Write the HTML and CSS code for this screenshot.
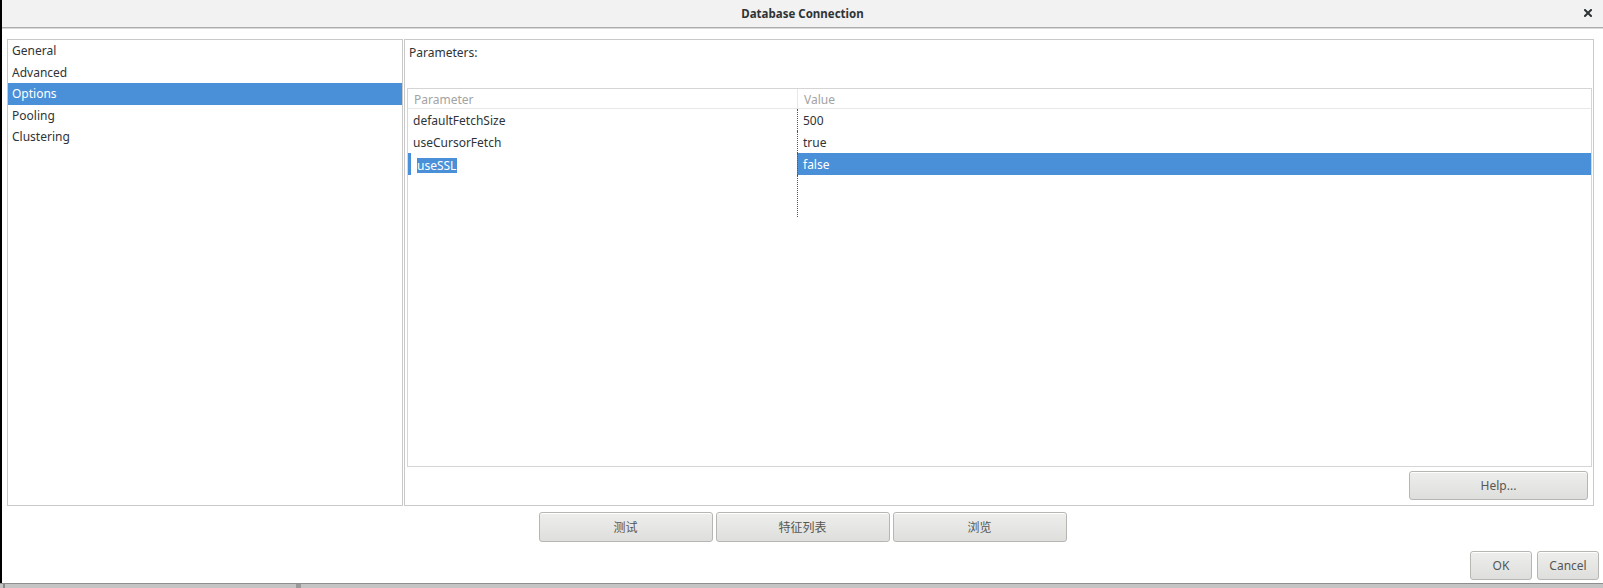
FILE: index.html
```html
<!DOCTYPE html>
<html>
<head>
<meta charset="utf-8">
<title>Database Connection</title>
<link rel="stylesheet" href="styles.css">
</head>
<body>
<div class="window">
  <div class="titlebar">
    <span class="title">Database Connection</span>
    <svg class="close" width="8" height="8" viewBox="0 0 8 8"><path d="M1 1 L7 7 M7 1 L1 7" stroke="#2e3436" stroke-width="2" stroke-linecap="square"/></svg>
  </div>
  <div class="panels">
    <div class="nav">
      <div class="nav-item">General</div>
      <div class="nav-item">Advanced</div>
      <div class="nav-item selected">Options</div>
      <div class="nav-item">Pooling</div>
      <div class="nav-item">Clustering</div>
    </div>
    <div class="options">
      <div class="params-label">Parameters:</div>
      <div class="table">
        <div class="thead">
          <div class="th th-param">Parameter</div>
          <div class="th th-value">Value</div>
        </div>
        <div class="tbody">
          <div class="row">
            <div class="cell param">defaultFetchSize</div>
            <div class="cell value">500</div>
          </div>
          <div class="row">
            <div class="cell param">useCursorFetch</div>
            <div class="cell value">true</div>
          </div>
          <div class="row">
            <div class="cell param editing"><span class="sel-text">useSSL</span></div>
            <div class="cell value selected">false</div>
          </div>
          <div class="row filler">
            <div class="cell param"></div>
            <div class="cell value"></div>
          </div>
        </div>
      </div>
      <div class="help-row">
        <button class="btn help">Help...</button>
      </div>
    </div>
  </div>
  <div class="action-row">
    <button class="btn action">测试</button>
    <button class="btn action">特征列表</button>
    <button class="btn action">浏览</button>
  </div>
  <div class="footer">
    <button class="btn ok">OK</button>
    <button class="btn cancel">Cancel</button>
  </div>
</div>
<div class="taskbar">
  <span class="grip g1"></span>
  <span class="grip g2"></span>
</div>
</body>
</html>
```
FILE: styles.css
```css
html, body {
  margin: 0;
  padding: 0;
  width: 1603px;
  height: 588px;
  overflow: hidden;
  background: #ffffff;
  font-family: "Noto Sans", "Noto Sans CJK SC", sans-serif;
  font-size: 12px;
  color: #2e3436;
}

.window {
  height: 583px;
  border-left: 2px solid #000000;
  display: flex;
  flex-direction: column;
  background: #ffffff;
}

.titlebar {
  height: 27px;
  flex: none;
  background: #f2f2f2;
  border-bottom: 1px solid #adadad;
  box-shadow: 0 1px 0 #dadada;
  display: flex;
  align-items: center;
  justify-content: center;
  position: relative;
}

.title {
  font-weight: bold;
  font-size: 11.5px;
  color: #2e3436;
}

.close {
  position: absolute;
  right: 11px;
  top: 9px;
}

.panels {
  display: flex;
  gap: 1px;
  height: 467px;
  margin-top: 11px;
  padding-left: 5px;
  flex: none;
}

.nav {
  width: 394px;
  border: 1px solid #c9c9c9;
  padding-top: 0;
  box-sizing: content-box;
  height: 465px;
}

.nav-item {
  height: 21.6px;
  line-height: 21.6px;
  padding-left: 4px;
  padding-top: 1px;
  box-sizing: border-box;
  line-height: 20.6px;
  color: #2e3436;
}

.nav-item.selected {
  background: #4a90d9;
  color: #ffffff;
}

.options {
  width: 1188px;
  height: 465px;
  border: 1px solid #c9c9c9;
  display: flex;
  flex-direction: column;
}

.params-label {
  height: 47px;
  padding-top: 1px;
  padding-left: 4px;
  line-height: 24px;
  flex: none;
}

.table {
  margin-left: 2px;
  margin-right: 1px;
  height: 377px;
  border: 1px solid #d5d5d5;
  flex: none;
}

.thead {
  display: flex;
  height: 19px;
  border-bottom: 1px solid #e8e8e8;
}

.th {
  line-height: 19px;
  padding-top: 1px;
  color: #a3a3a3;
}

.th-param {
  width: 383px;
  padding-left: 6px;
  border-right: 1px solid #e8e8e8;
}

.th-value {
  padding-left: 6px;
}

.row {
  display: flex;
  height: 22px;
}

.row.filler {
  height: 42px;
}

.cell {
  line-height: 21px;
  padding-top: 1px;
  color: #2e3436;
}

.cell.param {
  width: 384px;
  padding-left: 5px;
}

.cell.value {
  flex: 1;
  padding-left: 5px;
  border-left: 1px dotted #555555;
}

.cell.value.selected {
  background: #4a90d9;
  color: #ffffff;
}

.cell.param.editing {
  border-left: 3px solid #4a90d9;
  padding-left: 6px;
  width: 380px;
}

.sel-text {
  background: #4a90d9;
  color: #ffffff;
  display: inline-block;
  line-height: 15px;
  vertical-align: middle;
  padding-right: 1px;
}

.help-row {
  display: flex;
  justify-content: flex-end;
  padding-right: 5px;
  margin-top: 4px;
}

.btn {
  font-family: "Noto Sans", "Noto Sans CJK SC", sans-serif;
  font-size: 12px;
  color: #555753;
  background: linear-gradient(#eeeeec, #dededc);
  border: 1px solid #b6b6b3;
  border-radius: 3px;
  box-shadow: inset 0 1px 0 #ffffff;
  padding: 0;
  margin: 0;
}

.help {
  width: 179px;
  height: 29px;
}

.action-row {
  display: flex;
  justify-content: center;
  gap: 3px;
  margin-top: 6px;
  height: 30px;
  flex: none;
}

.action {
  width: 174px;
  height: 30px;
}

.footer {
  display: flex;
  justify-content: flex-end;
  gap: 5px;
  padding-right: 4px;
  margin-top: 9px;
  height: 29px;
  flex: none;
}

.ok {
  width: 62px;
  height: 29px;
}

.cancel {
  width: 62px;
  height: 29px;
}

.taskbar {
  height: 5px;
  background: #c4c4c4;
  border-top: 1px solid #8e8e8e;
  box-sizing: border-box;
  position: relative;
}

.grip {
  position: absolute;
  top: 0;
  height: 4px;
  width: 2px;
  background: #8a8a8a;
}

.g1 { left: 3px; }
.g2 { left: 296px; width: 5px; background: #9a9a9a; }
```
